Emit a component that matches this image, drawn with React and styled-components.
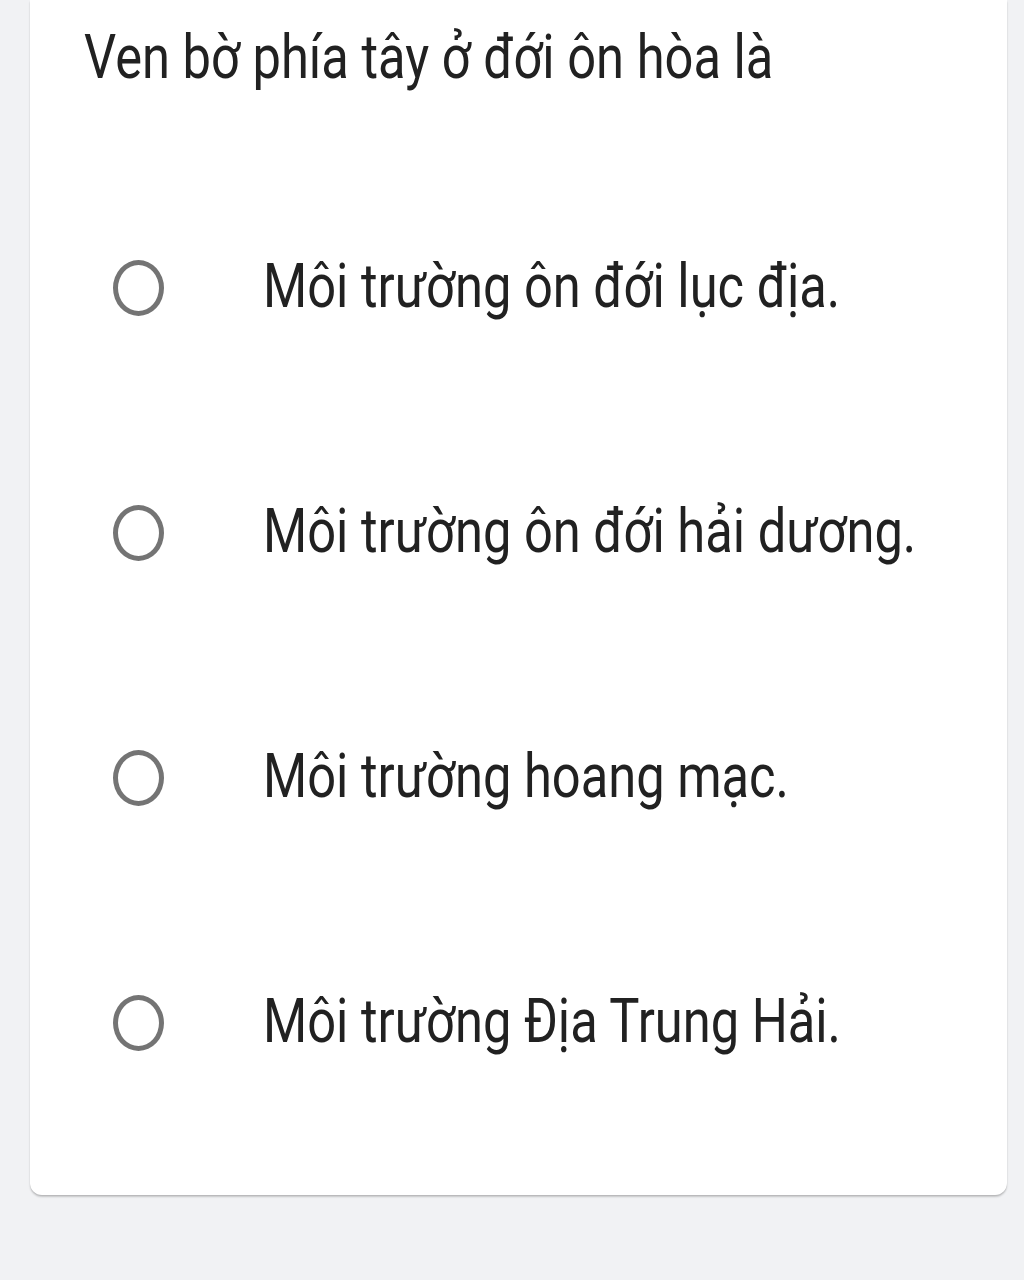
import React from 'react';
import styled, { createGlobalStyle } from 'styled-components';

const GlobalStyle = createGlobalStyle`
	html, body {
		margin: 0;
		padding: 0;
		background: #f1f2f4;
	}
	body {
		font-family: Roboto, 'Noto Sans', sans-serif;
	}
`;

const Page = styled.div`
	width: 1024px;
	height: 1280px;
	box-sizing: border-box;
	padding: 0 17px 0 30px;
	background: #f1f2f4;
`;

const Card = styled.div`
	background: #ffffff;
	border-radius: 0 0 12px 12px;
	box-shadow: 0 2px 2px rgba(0, 0, 0, 0.18), 0 1px 1px rgba(0, 0, 0, 0.08);
	padding: 27px 0 50px 54px;
`;

const Question = styled.div`
	font-size: 61px;
	line-height: 61px;
	color: #212121;
	white-space: nowrap;
	margin-bottom: 77px;
`;

// the shot is stretched vertically, so text is squeezed sideways to match
const Squeeze = styled.span`
	display: inline-block;
	transform: scaleX(${({ ratio }) => ratio});
	transform-origin: left center;
`;

const OptionList = styled.div`
	display: flex;
	flex-direction: column;
`;

const OptionRow = styled.label`
	display: flex;
	align-items: center;
	height: 245px;
	padding-left: 29px;
`;

const Radio = styled.span`
	flex: none;
	width: 51px;
	height: 56px;
	box-sizing: border-box;
	border: 5px solid #747474;
	border-radius: 50%;
	margin-right: 99px;
`;

const OptionText = styled.span`
	font-size: 61px;
	line-height: 61px;
	color: #212121;
	white-space: nowrap;
	margin-bottom: 3px;
`;

const options = [
	'Môi trường ôn đới lục địa.',
	'Môi trường ôn đới hải dương.',
	'Môi trường hoang mạc.',
	'Môi trường Địa Trung Hải.',
];

export default function App() {
	return (
		<Page>
			<GlobalStyle />
			<Card>
				<Question>
					<Squeeze ratio={0.83}>Ven bờ phía tây ở đới ôn hòa là</Squeeze>
				</Question>
				<OptionList>
					{options.map((text) => (
						<OptionRow key={text}>
							<Radio />
							<OptionText>
								<Squeeze ratio={0.83}>{text}</Squeeze>
							</OptionText>
						</OptionRow>
					))}
				</OptionList>
			</Card>
		</Page>
	);
}
